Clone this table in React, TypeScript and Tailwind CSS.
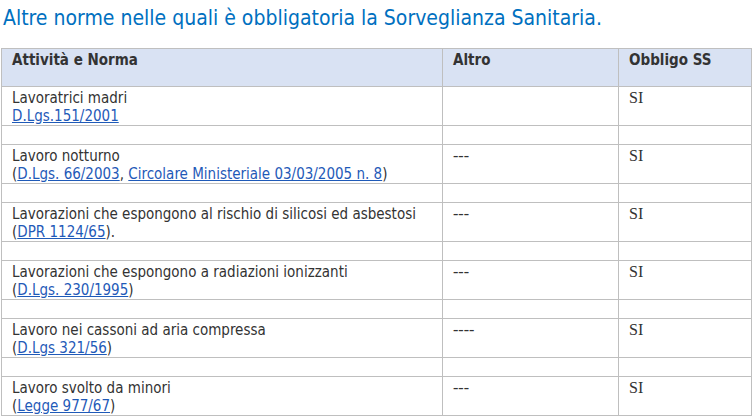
export default function App() {
  const link = "text-[#1f5ab8] underline";
  const rows = [
    {
      title: "Lavoratrici madri",
      norm: <a href="#" className={link}>D.Lgs.151/2001</a>,
      altro: "",
    },
    {
      title: "Lavoro notturno",
      norm: (
        <>
          (<a href="#" className={link}>D.Lgs. 66/2003</a>,{" "}
          <a href="#" className={link}>Circolare Ministeriale 03/03/2005 n. 8</a>)
        </>
      ),
      altro: "---",
    },
    {
      title: "Lavorazioni che espongono al rischio di silicosi ed asbestosi",
      norm: (
        <>
          (<a href="#" className={link}>DPR 1124/65</a>).
        </>
      ),
      altro: "---",
    },
    {
      title: "Lavorazioni che espongono a radiazioni ionizzanti",
      norm: (
        <>
          (<a href="#" className={link}>D.Lgs. 230/1995</a>)
        </>
      ),
      altro: "---",
    },
    {
      title: "Lavoro nei cassoni ad aria compressa",
      norm: (
        <>
          (<a href="#" className={link}>D.Lgs 321/56</a>)
        </>
      ),
      altro: "----",
    },
    {
      title: "Lavoro svolto da minori",
      norm: (
        <>
          (<a href="#" className={link}>Legge 977/67</a>)
        </>
      ),
      altro: "---",
    },
  ];

  const cell = "border border-[#bfbfbf] align-top px-[10px] pt-[2px]";
  const serif = "font-['Liberation_Serif',serif] text-[16px] text-[#333]";

  return (
    <div className="w-[753px] h-[418px] overflow-hidden bg-white font-['DejaVu_Sans_Condensed','DejaVu_Sans',sans-serif] text-[15px] leading-[18px] text-[#333]">
      <h1 className="pl-[3px] pt-[5px] text-[21px] leading-[27px] text-[#0070c0]">
        Altre norme nelle quali è obbligatoria la Sorveglianza Sanitaria.
      </h1>
      <table className="ml-[1px] mt-[16px] w-[750px] border-collapse table-fixed">
        <colgroup>
          <col className="w-[441px]" />
          <col className="w-[176px]" />
          <col className="w-[133px]" />
        </colgroup>
        <thead>
          <tr className="h-[38px] bg-[#d9e2f3]">
            <th className={`${cell} text-left font-bold`}>Attività e Norma</th>
            <th className={`${cell} text-left font-bold`}>Altro</th>
            <th className={`${cell} text-left font-bold`}>Obbligo SS</th>
          </tr>
        </thead>
        <tbody>
          {rows.map((r, i) => (
            <>
              {i > 0 && (
                <tr key={"s" + i} className="h-[19px]">
                  <td className={cell}></td>
                  <td className={cell}></td>
                  <td className={cell}></td>
                </tr>
              )}
              <tr key={i} className="h-[39px]">
                <td className={cell}>
                  <div>{r.title}</div>
                  <div>{r.norm}</div>
                </td>
                <td className={`${cell} ${serif}`}>{r.altro}</td>
                <td className={`${cell} ${serif}`}>SI</td>
              </tr>
            </>
          ))}
        </tbody>
      </table>
    </div>
  );
}
